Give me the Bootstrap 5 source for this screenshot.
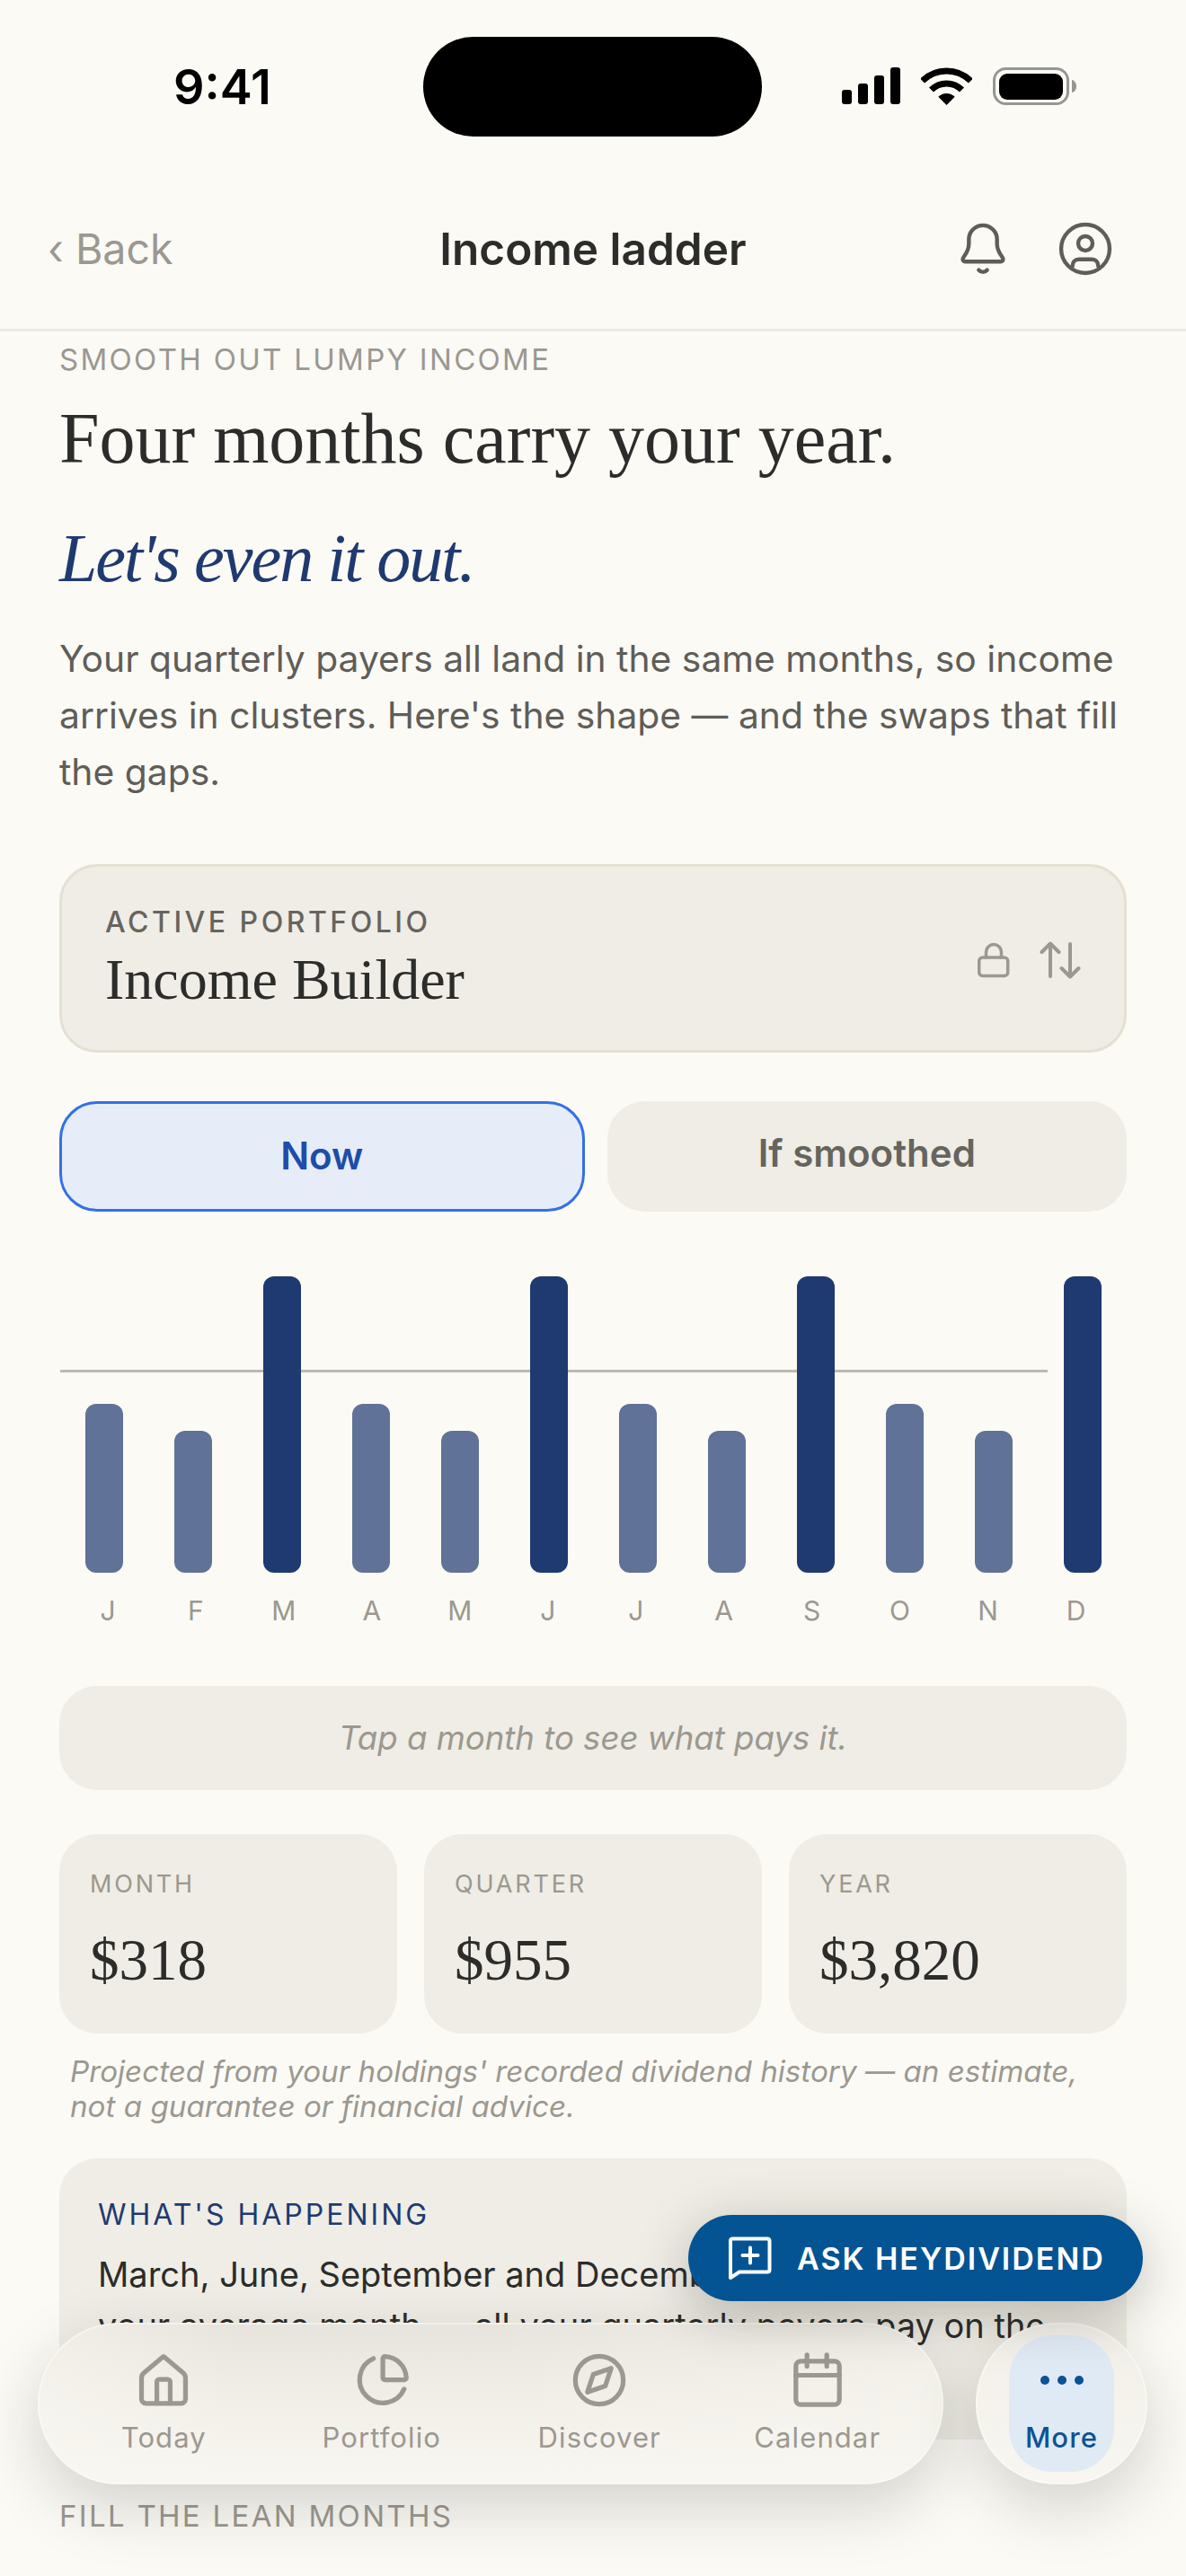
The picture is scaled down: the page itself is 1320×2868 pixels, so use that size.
<!DOCTYPE html>
<html lang="en">
<head>
    <meta charset="UTF-8">
    <meta name="viewport" content="width=device-width, initial-scale=1.0">
    <title>Income ladder</title>
    <link href="https://cdn.jsdelivr.net/npm/bootstrap@5.3.0/dist/css/bootstrap.min.css" rel="stylesheet">
    <script src="https://cdn.jsdelivr.net/npm/bootstrap@5.3.0/dist/js/bootstrap.bundle.min.js"></script>
    <style>
        html, body { margin: 0; background: #fbfaf5; }
        body { font-family: Inter, "Liberation Sans", sans-serif; color: #2c2c2a; }
        .app-screen { position: relative; width: 1320px; height: 2868px; overflow: hidden; background: #fbfaf5; }
        svg { display: block; flex: none; }

        /* status bar */
        .status-row { padding-top: 41px; }
        .status-left { width: 471px; padding-left: 24px; text-align: center; font-size: 54px; line-height: 111px; font-weight: 600; color: #000; }
        .island { width: 377px; height: 111px; background: #000; border-radius: 56px; }
        .status-right { width: 472px; padding-left: 89px; padding-top: 34px; gap: 23px; }

        /* top bar */
        .top-bar { padding: 75px 53px 39px; height: 217px; border-bottom: 3px solid #efe9df; }
        .top-side { flex: 1 1 0; }
        .back-link { font-size: 46.5px; line-height: 100px; color: #9b9890; }
        .page-title { font-size: 49.5px; line-height: 100px; font-weight: 600; color: #2c2c2a; margin: 0; }
        .top-icons { gap: 48px; margin-right: 26px; }

        /* content */
        .page-body { padding: 0 66px; }
        .eyebrow { margin: 11px 0 0; font-size: 33px; line-height: 40px; letter-spacing: 2.3px; color: #9b9890; }
        .hero-title { margin: 23px 0 0; font-family: "Liberation Serif", serif; font-size: 80px; line-height: 90px; font-weight: 400; color: #2c2c2a; }
        .hero-sub { margin: 43px 0 0; font-family: "Liberation Serif", serif; font-style: italic; font-size: 76px; line-height: 90px; letter-spacing: -2px; font-weight: 400; color: #1f3a70; }
        .intro { margin: 36px 0 0; font-size: 40.8px; line-height: 63px; color: #5f5d58; }

        .portfolio-box { margin-top: 71px; padding: 46px 48px 43px 48px; border: 3px solid #e5e0d3; border-radius: 42px; background: #efede5; }
        .portfolio-label { font-size: 32px; line-height: 32px; font-weight: 500; letter-spacing: 3.5px; color: #66645e; }
        .portfolio-name { margin-top: 13px; font-family: "Liberation Serif", serif; font-size: 64px; line-height: 70px; color: #2c2c2a; }
        .portfolio-icons { gap: 33px; }

        .mode-row { margin-top: 54px; gap: 25px; }
        .mode-btn { flex: 1 1 0; height: 123px; padding-top: 28px; border-radius: 42px; text-align: center; font-size: 42px; line-height: 60px; font-weight: 600; }
        .mode-on { border: 3px solid #3470e4; background: #e6edf9; color: #1e4da8; }
        .mode-off { background: #efede5; color: #66645e; }

        .chart-wrap { position: relative; margin-top: 72px; }
        .chart-avg { position: absolute; left: 1px; top: 104px; width: 1099px; height: 3px; background: #bdbab2; }
        .bar-row { position: relative; height: 330px; align-items: flex-end; }
        .bar-cell { flex: 1 1 0; display: flex; justify-content: center; }
        .month-bar { width: 42px; border-radius: 12px; }
        .bar-high { height: 330px; background: #1f3a70; }
        .bar-mid { height: 188px; background: #607297; }
        .bar-low { height: 158px; background: #607297; }
        .label-row { margin-top: 27px; padding: 0 7px 0 5.5px; }
        .month-label { flex: 1 1 0; text-align: center; font-size: 30px; line-height: 30px; letter-spacing: 1px; color: #9b9890; }

        .tap-note { margin-top: 69px; height: 116px; border-radius: 42px; background: #efede5; font-size: 36.6px; font-style: italic; color: #9b9890; }

        .stat-row { margin-top: 49px; gap: 30px; }
        .stat-box { flex: 1 1 0; padding: 40px 34px 42px; border-radius: 42px; background: #efede5; }
        .stat-label { font-size: 27px; line-height: 32px; letter-spacing: 2.8px; color: #9b9890; }
        .stat-value { margin-top: 28px; font-family: "Liberation Serif", serif; font-size: 65px; line-height: 80px; color: #2c2c2a; }
        .foot-note { margin: 23px 0 0; padding: 0 24px 0 12px; font-size: 33.2px; line-height: 39px; font-style: italic; color: #9b9890; }

        .happening { margin-top: 38px; padding: 45px 43px 41px; border-radius: 42px; background: #efede5; }
        .happening-label { font-size: 32px; line-height: 36px; letter-spacing: 3px; color: #1f3a70; }
        .happening-text { margin: 20px 0 0; font-size: 38px; line-height: 57px; color: #2c2c2a; }
        .section-next { margin: 65px 0 0; font-size: 33px; line-height: 40px; letter-spacing: 2.3px; color: #9b9890; }

        /* floating things */
        .ask-btn { position: absolute; left: 766px; top: 2466px; width: 506px; height: 96px; padding-left: 43px; gap: 26px; border-radius: 48px; background: #045494; color: #fff; font-size: 34px; font-weight: 600; letter-spacing: 2px; box-shadow: 0 14px 60px rgba(40, 38, 28, .28); z-index: 3; }
        .dock { position: absolute; left: 42px; top: 2586px; width: 1235px; gap: 36px; z-index: 2; }
        .dock-main, .dock-more { height: 180px; border-radius: 90px; box-shadow: 0 24px 70px rgba(30, 30, 20, .18), inset 0 0 0 2px rgba(252, 251, 246, .55); }
        .dock-main { width: 1008px; padding: 31px 19px 0; background: linear-gradient(90deg, rgba(249, 247, 241, .55), rgba(249, 247, 241, 0) 22%, rgba(249, 247, 241, 0) 50%, rgba(249, 247, 241, .5)), linear-gradient(180deg, #e6e4dc 0%, #f1efe8 50%, #f9f7f1 100%); }
        .dock-more { width: 191px; padding: 14px 37px; background: linear-gradient(180deg, #f1efe8, #f8f6f0); }
        .dock-item { flex: 1 1 0; text-align: center; font-size: 31px; line-height: 36px; letter-spacing: 1.1px; color: #9b9890; }
        .dock-item svg { margin: 0 auto 13px; }
        .more-inner { height: 152px; padding-top: 17px; border-radius: 48px; background: #e0eaf5; color: #0b5394; font-weight: 500; }
    </style>
</head>
<body>
<div class="app-screen">
    <div class="status-row d-flex">
        <div class="status-left">9:41</div>
        <div class="island"></div>
        <div class="status-right d-flex align-items-start">
            <svg width="65" height="42" viewBox="0 0 65 42" fill="#000">
                <rect x="0" y="25" width="11" height="16" rx="3"/>
                <rect x="18" y="18" width="11" height="23" rx="3"/>
                <rect x="36" y="9" width="11" height="32" rx="3"/>
                <rect x="54" y="0" width="11" height="41" rx="3"/>
            </svg>
            <svg width="57" height="42" viewBox="0 0 57 42" fill="none" stroke="#000">
                <path d="M1.6 15.1A38 38 0 0 1 55.4 15.1" stroke-width="7"/>
                <path d="M11.5 25A24 24 0 0 1 45.5 25" stroke-width="7"/>
                <path d="M28.5 42 19.3 32.8A13 13 0 0 1 37.7 32.8Z" fill="#000" stroke="none"/>
            </svg>
            <svg width="93" height="42" viewBox="0 0 93 42">
                <rect x="1.5" y="1.5" width="82" height="39" rx="13" fill="none" stroke="#979693" stroke-width="3"/>
                <rect x="7" y="7" width="71" height="29" rx="9" fill="#000"/>
                <path d="M88 14c3 .5 5 3.500 5 7s-2 6.500-5 7z" fill="#979693"/>
            </svg>
        </div>
    </div>

    <div class="top-bar d-flex align-items-center">
        <div class="top-side back-link">‹ Back</div>
        <h1 class="page-title">Income ladder</h1>
        <div class="top-side d-flex justify-content-end">
            <div class="top-icons d-flex">
                <svg width="66" height="66" viewBox="0 0 24 24" fill="none" stroke="#5f5d58" stroke-width="1.600" stroke-linecap="round" stroke-linejoin="round">
                    <path d="M6.300 8.200a5.700 5.700 0 0 1 11.400 0v1.800c0 2 .7 3.400 2 5.200.7.900.6 2-.7 2H5c-1.300 0-1.400-1.100-.7-2 1.300-1.800 2-3.200 2-5.200z"/>
                    <path d="M10.300 20.600c.9 1.100 2.500 1.100 3.400 0"/>
                </svg>
                <svg width="66" height="66" viewBox="0 0 24 24" fill="none" stroke="#5f5d58" stroke-width="1.600" stroke-linecap="round" stroke-linejoin="round">
                    <circle cx="12" cy="12" r="9.800"/>
                    <circle cx="12" cy="9.800" r="2.900"/>
                    <path d="M6.800 19c0-1.600 1-2.700 2.600-2.700h5.200c1.600 0 2.600 1.100 2.600 2.700"/>
                </svg>
            </div>
        </div>
    </div>

    <div class="page-body">
        <p class="eyebrow">SMOOTH OUT LUMPY INCOME</p>
        <h2 class="hero-title">Four months carry your year.</h2>
        <h3 class="hero-sub">Let's even it out.</h3>
        <p class="intro">Your quarterly payers all land in the same months, so income arrives in clusters. Here's the shape — and the swaps that fill the gaps.</p>

        <div class="portfolio-box d-flex justify-content-between align-items-center">
            <div>
                <div class="portfolio-label">ACTIVE PORTFOLIO</div>
                <div class="portfolio-name">Income Builder</div>
            </div>
            <div class="portfolio-icons d-flex align-items-center">
                <svg width="36" height="40" viewBox="0 0 36 40" fill="none" stroke="#9b9890" stroke-width="3.500" stroke-linecap="round" stroke-linejoin="round">
                    <rect x="1.700" y="17" width="32" height="20.500" rx="4"/>
                    <path d="M9.500 17v-6a8.500 8.500 0 0 1 17 0v6"/>
                </svg>
                <svg width="46" height="42" viewBox="0 0 46 42" fill="none" stroke="#9b9890" stroke-width="4" stroke-linecap="round" stroke-linejoin="round">
                    <path d="M12 3V39M2.500 12 12 2.500 21.500 12"/>
                    <path d="M34 3V39M24.500 30 34 39.500 43.500 30"/>
                </svg>
            </div>
        </div>

        <div class="mode-row d-flex">
            <div class="mode-btn mode-on">Now</div>
            <div class="mode-btn mode-off">If smoothed</div>
        </div>

        <div class="chart-wrap">
            <div class="chart-avg"></div>
            <div class="bar-row d-flex">
                <div class="bar-cell"><div class="month-bar bar-mid"></div></div>
                <div class="bar-cell"><div class="month-bar bar-low"></div></div>
                <div class="bar-cell"><div class="month-bar bar-high"></div></div>
                <div class="bar-cell"><div class="month-bar bar-mid"></div></div>
                <div class="bar-cell"><div class="month-bar bar-low"></div></div>
                <div class="bar-cell"><div class="month-bar bar-high"></div></div>
                <div class="bar-cell"><div class="month-bar bar-mid"></div></div>
                <div class="bar-cell"><div class="month-bar bar-low"></div></div>
                <div class="bar-cell"><div class="month-bar bar-high"></div></div>
                <div class="bar-cell"><div class="month-bar bar-mid"></div></div>
                <div class="bar-cell"><div class="month-bar bar-low"></div></div>
                <div class="bar-cell"><div class="month-bar bar-high"></div></div>
            </div>
            <div class="label-row d-flex">
                <div class="month-label">J</div>
                <div class="month-label">F</div>
                <div class="month-label">M</div>
                <div class="month-label">A</div>
                <div class="month-label">M</div>
                <div class="month-label">J</div>
                <div class="month-label">J</div>
                <div class="month-label">A</div>
                <div class="month-label">S</div>
                <div class="month-label">O</div>
                <div class="month-label">N</div>
                <div class="month-label">D</div>
            </div>
        </div>

        <div class="tap-note d-flex align-items-center justify-content-center">Tap a month to see what pays it.</div>

        <div class="stat-row d-flex">
            <div class="stat-box">
                <div class="stat-label">MONTH</div>
                <div class="stat-value">$318</div>
            </div>
            <div class="stat-box">
                <div class="stat-label">QUARTER</div>
                <div class="stat-value">$955</div>
            </div>
            <div class="stat-box">
                <div class="stat-label">YEAR</div>
                <div class="stat-value">$3,820</div>
            </div>
        </div>
        <p class="foot-note">Projected from your holdings' recorded dividend history — an estimate, not a guarantee or financial advice.</p>

        <div class="happening">
            <div class="happening-label">WHAT'S HAPPENING</div>
            <p class="happening-text">March, June, September and December pay about 3× what your average month — all your quarterly payers pay on the same schedule.</p>
        </div>

        <p class="section-next">FILL THE LEAN MONTHS</p>
    </div>

    <div class="ask-btn d-flex align-items-center">
        <svg width="52" height="50" viewBox="0 0 52 50" fill="none" stroke="#fff" stroke-width="4" stroke-linecap="round" stroke-linejoin="round">
            <path d="M4 6c0-1.500 1-2.500 2.500-2.500H45c1.500 0 2.500 1 2.500 2.500v32c0 1.500-1 2.500-2.500 2.500H14L4 47z"/>
            <path d="M26 13.500v17M17.500 22h17"/>
        </svg>
        <span>ASK HEYDIVIDEND</span>
    </div>

    <div class="dock d-flex">
        <div class="dock-main d-flex">
            <div class="dock-item">
                <svg width="66" height="66" viewBox="0 0 24 24" fill="none" stroke="#9b9890" stroke-width="1.900" stroke-linecap="round" stroke-linejoin="round">
                    <path d="M12 2.400l7.900 6.600c.7.600 1 1.200 1 2.100v8.500c0 1-.8 1.800-1.800 1.800H4.900c-1 0-1.800-.8-1.800-1.800v-8.500c0-.9.3-1.500 1-2.100z"/>
                    <path d="M9.300 21.300v-8.600c0-.6.4-1 1-1h3.400c.6 0 1 .4 1 1v8.600"/>
                </svg>
                Today
            </div>
            <div class="dock-item">
                <svg width="66" height="66" viewBox="0 0 24 24" fill="none" stroke="#9b9890" stroke-width="1.900" stroke-linecap="round" stroke-linejoin="round">
                    <path d="M8.600 3.200A9.400 9.400 0 1 0 21 15.600"/>
                    <path d="M12.400 3.300c0-.5.4-.9.9-.9 4.700.2 8.400 4 8.600 8.600 0 .5-.4.9-.9.9h-7.700c-.5 0-.9-.4-.9-.9z"/>
                </svg>
                Portfolio
            </div>
            <div class="dock-item">
                <svg width="66" height="66" viewBox="0 0 24 24" fill="none" stroke="#9b9890" stroke-width="1.900" stroke-linecap="round" stroke-linejoin="round">
                    <circle cx="12" cy="12" r="9.700"/>
                    <path d="M16.800 7.200 14.400 14.400 7.200 16.800 9.600 9.600z"/>
                </svg>
                Discover
            </div>
            <div class="dock-item">
                <svg width="66" height="66" viewBox="0 0 24 24" fill="none" stroke="#9b9890" stroke-width="1.900" stroke-linecap="round" stroke-linejoin="round">
                    <rect x="3.200" y="4.300" width="17.600" height="17.600" rx="2"/>
                    <path d="M3.200 10h17.600M7.700 1.800v4.600M15.700 1.800v4.600"/>
                </svg>
                Calendar
            </div>
        </div>
        <div class="dock-more">
            <div class="dock-item more-inner">
                <svg width="66" height="66" viewBox="0 0 66 66" fill="#0b5394">
                    <circle cx="14" cy="33" r="5"/>
                    <circle cx="33" cy="33" r="5"/>
                    <circle cx="52" cy="33" r="5"/>
                </svg>
                More
            </div>
        </div>
    </div>
</div>
</body>
</html>
